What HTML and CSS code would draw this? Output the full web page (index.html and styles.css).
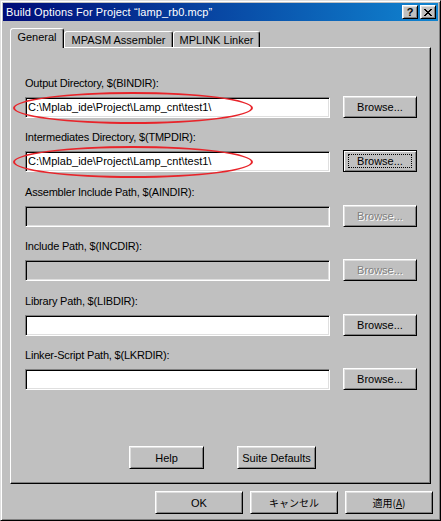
FILE: index.html
```html
<!DOCTYPE html>
<html lang="ja">
<head>
    <meta charset="UTF-8">
    <title>Build Options For Project</title>
    <link rel="stylesheet" href="styles.css">
</head>
<body>

<div class="window">
    <!-- Title bar -->
    <div class="titlebar">
        <span class="title">Build Options For Project “lamp_rb0.mcp”</span>
        <div class="title-btns">
            <span class="tbtn help-q">?</span>
            <span class="tbtn">
                <svg width="8" height="7" viewBox="0 0 8 7"><path d="M0 0h2v1h1v1h2v-1h1v-1h2v1h-1v1h-1v1h-1v1h1v1h1v1h1v1h-2v-1h-1v-1h-2v1h-1v1h-2v-1h1v-1h1v-1h1v-1h-1v-1h-1v-1h-1z" fill="#000"/></svg>
            </span>
        </div>
    </div>

    <!-- Tabs -->
    <div class="tabs">
        <div class="tab active">General</div>
        <div class="tab tab-asm">MPASM Assembler</div>
        <div class="tab tab-link">MPLINK Linker</div>
    </div>

    <div class="panel">
        <div class="field">
            <div class="label">Output Directory, $(BINDIR):</div>
            <div class="controls">
                <div class="input">C:\Mplab_ide\Project\Lamp_cnt\test1\</div>
                <div class="btn browse">Browse...</div>
                <span class="mark"></span>
            </div>
        </div>
        <div class="field">
            <div class="label">Intermediates Directory, $(TMPDIR):</div>
            <div class="controls">
                <div class="input">C:\Mplab_ide\Project\Lamp_cnt\test1\</div>
                <div class="btn browse default">Browse...</div>
                <span class="mark"></span>
            </div>
        </div>
        <div class="field">
            <div class="label">Assembler Include Path, $(AINDIR):</div>
            <div class="controls">
                <div class="input disabled"></div>
                <div class="btn browse disabled">Browse...</div>
            </div>
        </div>
        <div class="field">
            <div class="label">Include Path, $(INCDIR):</div>
            <div class="controls">
                <div class="input disabled"></div>
                <div class="btn browse disabled">Browse...</div>
            </div>
        </div>
        <div class="field">
            <div class="label">Library Path, $(LIBDIR):</div>
            <div class="controls">
                <div class="input"></div>
                <div class="btn browse">Browse...</div>
            </div>
        </div>
        <div class="field">
            <div class="label">Linker-Script Path, $(LKRDIR):</div>
            <div class="controls">
                <div class="input"></div>
                <div class="btn browse">Browse...</div>
            </div>
        </div>

        <div class="panel-btns">
            <div class="btn btn-help">Help</div>
            <div class="btn btn-suite">Suite Defaults</div>
        </div>
    </div>

    <!-- Dialog buttons -->
    <div class="dialog-btns">
        <div class="btn dlg">OK</div>
        <div class="btn dlg jp">キャンセル</div>
        <div class="btn dlg jp">適用(<u>A</u>)</div>
    </div>
</div>

</body>
</html>
```

FILE: styles.css
```css
* {
    box-sizing: border-box;
}
body {
    margin: 0;
    font-family: "Liberation Sans", Arial, "Noto Sans CJK JP", sans-serif;
    font-size: 11px;
    color: #000;
}
.window {
    width: 441px;
    height: 521px;
    padding: 2px;
    background: #c0c0c0;
    border: 1px solid;
    border-color: #dfdfdf #000 #000 #dfdfdf;
    box-shadow: inset 1px 1px #fff, inset -1px -1px #808080;
}

/* title bar */
.titlebar {
    height: 18px;
    display: flex;
    align-items: center;
    justify-content: space-between;
    padding: 0 2px 0 3px;
    background: linear-gradient(to right, #000c78, #1084d0);
}
.title {
    color: #fff;
    font-size: 11px;
    letter-spacing: 0.1px;
    white-space: nowrap;
}
.title-btns {
    display: flex;
    gap: 2px;
}
.tbtn {
    width: 16px;
    height: 14px;
    display: flex;
    align-items: center;
    justify-content: center;
    background: #c0c0c0;
    border: 1px solid;
    border-color: #fff #000 #000 #fff;
    box-shadow: inset 1px 1px #dfdfdf, inset -1px -1px #808080;
    font-weight: bold;
    font-size: 11px;
}

/* tabs */
.tabs {
    display: flex;
    align-items: flex-end;
    height: 20px;
    margin: 7px 0 -1px 7px;
    position: relative;
    z-index: 1;
}
.tab {
    height: 16px;
    margin-bottom: 1px;
    display: flex;
    align-items: center;
    justify-content: center;
    background: #c0c0c0;
    border: 1px solid;
    border-bottom: none;
    border-color: #fff #000 transparent #fff;
    border-radius: 3px 3px 0 0;
    box-shadow: inset -1px 0 #808080;
    white-space: nowrap;
}
.tab.active {
    width: 54px;
    height: 20px;
    margin-bottom: 0;
    padding-bottom: 4px;
}
.tab-asm { width: 109px; }
.tab-link { width: 87px; }

/* panel */
.panel {
    height: 437px;
    margin: 0 7px;
    padding: 29px 13px 14px 14px;
    display: flex;
    flex-direction: column;
    border: 1px solid;
    border-color: #fff #000 #000 #fff;
    box-shadow: inset -1px -1px #808080;
}
.field {
    margin-bottom: 13.4px;
}
.label {
    line-height: 13px;
    margin-bottom: 6px;
    letter-spacing: -0.2px;
    white-space: nowrap;
}
.controls {
    display: flex;
    align-items: flex-start;
    position: relative;
}
.input {
    width: 305px;
    height: 21px;
    margin-top: 1px;
    padding: 0 2px;
    line-height: 19px;
    white-space: nowrap;
    background: #fff;
    border: 1px solid;
    border-color: #808080 #fff #fff #808080;
    box-shadow: inset 1px 1px #000, inset -1px -1px #dfdfdf;
}
.input.disabled {
    background: #c0c0c0;
}
.mark {
    position: absolute;
    left: -12px;
    top: -4px;
    width: 240px;
    height: 32px;
    border: 2px solid #e8242a;
    border-radius: 50%;
}

/* buttons */
.btn {
    height: 22px;
    display: flex;
    align-items: center;
    justify-content: center;
    position: relative;
    background: #c0c0c0;
    border: 1px solid;
    border-color: #fff #000 #000 #fff;
    box-shadow: inset 1px 1px #dfdfdf, inset -1px -1px #808080;
    white-space: nowrap;
}
.browse {
    width: 74px;
    margin-left: 13px;
}
.btn.default {
    border-color: #000;
    box-shadow: inset 1px 1px #fff, inset -1px -1px #808080;
}
.btn.default::after {
    content: "";
    position: absolute;
    inset: 3px 4px;
    border: 1px dotted #000;
}
.btn.disabled {
    color: #808080;
    text-shadow: 1px 1px #fff;
}
.panel-btns {
    margin-top: auto;
    display: flex;
    justify-content: center;
    gap: 33px;
    padding-left: 3px;
}
.btn-help {
    width: 75px;
    height: 23px;
}
.btn-suite {
    width: 79px;
    height: 23px;
}
.dialog-btns {
    display: flex;
    justify-content: flex-end;
    gap: 7px;
    margin: 7px 5px 0 0;
}
.dlg {
    width: 88px;
    height: 23px;
}
.jp {
    font-family: "Noto Sans CJK JP", sans-serif;
    font-size: 10px;
}
```
